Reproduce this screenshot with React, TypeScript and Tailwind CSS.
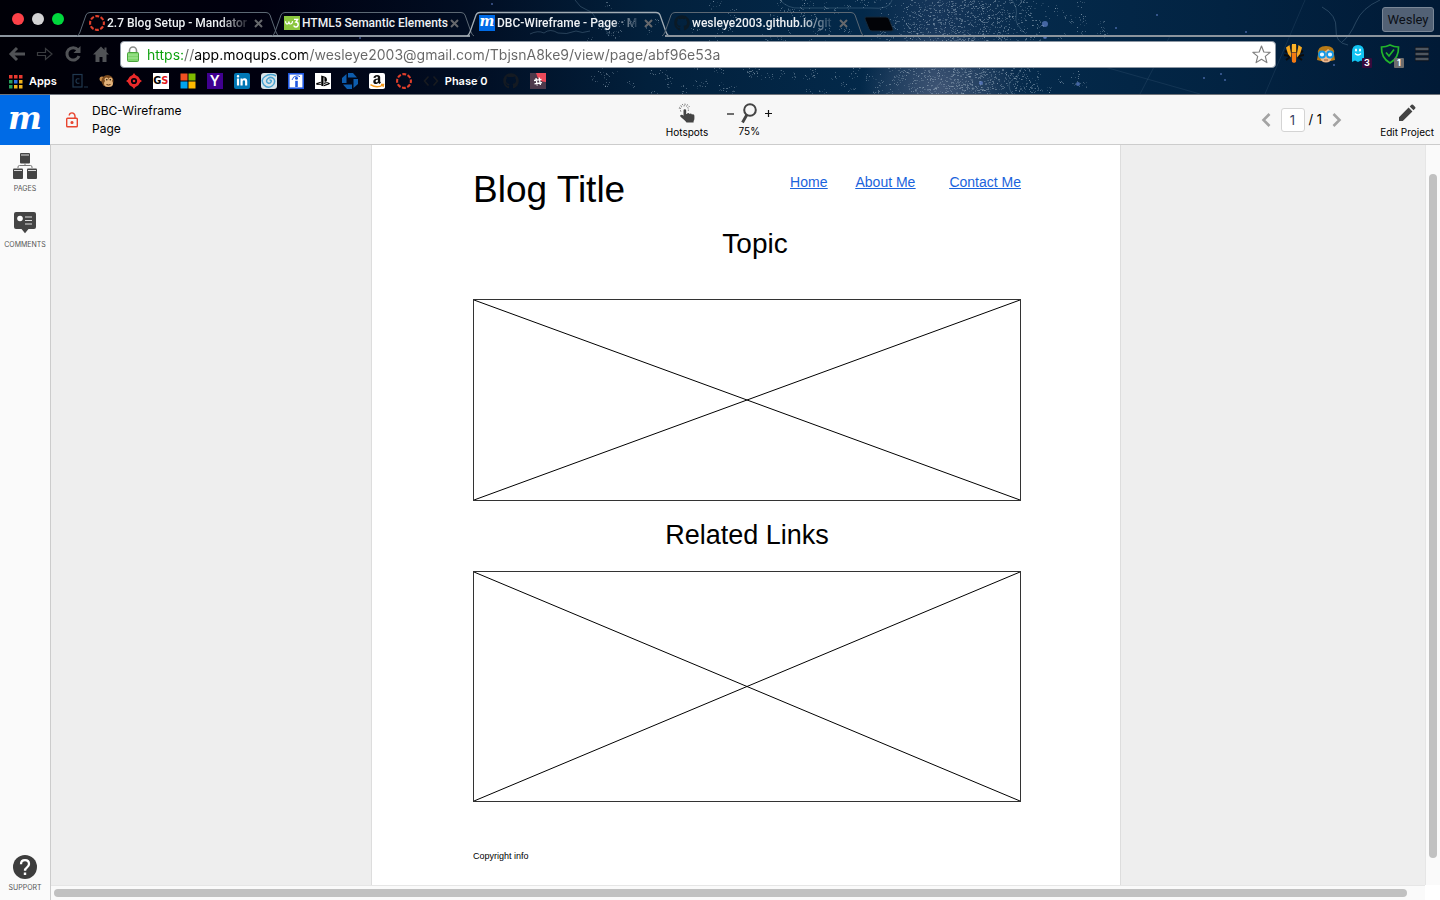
import type { ReactNode } from "react";
import { FaAmazon, FaGithub, FaLinkedinIn, FaPlaystation } from "react-icons/fa";

/* ---------- window backdrop ---------- */

function buildSpeckles() {
  let seed = 7;
  const next = () => {
    seed = (seed * 16807) % 2147483647;
    return seed / 2147483647;
  };
  const dots: { x: number; y: number; w: number; o: number }[] = [];
  // dense band of single points
  for (let i = 0; i < 1900; i++) {
    const spread = (next() + next()) / 2;
    dots.push({ x: Math.round(870 + spread * 180), y: Math.round(next() * 94), w: next() > 0.7 ? 2 : 1, o: 0.12 + next() * 0.35 });
  }
  // loose clusters on either side of the band
  for (let c = 0; c < 190; c++) {
    const cx = 585 + next() * 520;
    const cy = next() * 94;
    for (let i = 0; i < 8; i++) {
      const a = next() * 6.28;
      const r = 1 + next() * 4;
      dots.push({ x: Math.round(cx + Math.cos(a) * r), y: Math.round(cy + Math.sin(a) * r), w: 1, o: 0.12 + next() * 0.35 });
    }
  }
  return dots;
}

const speckles = buildSpeckles();
const stars = [
  [1045, 24, 3],
  [1045, 37, 2],
  [981, 83, 2],
  [1078, 84, 2],
  [1116, 28, 1],
  [1157, 15, 1],
  [1204, 78, 1],
  [1221, 74, 1],
  [1225, 80, 1],
  [1334, 65, 1],
  [1246, 32, 1],
  [492, 4, 1],
  [360, 38, 1],
];

function Backdrop() {
  return (
    <svg
      className="absolute inset-0 h-full w-full"
      viewBox="0 0 1440 95"
      preserveAspectRatio="xMidYMid slice"
      aria-hidden="true"
    >
      <defs>
        <linearGradient id="sky" x1="0" x2="1" y1="0" y2="0">
          <stop offset="0" stopColor="#000007" />
          <stop offset="0.18" stopColor="#00000f" />
          <stop offset="0.32" stopColor="#010d22" />
          <stop offset="0.45" stopColor="#02203c" />
          <stop offset="0.6" stopColor="#03294a" />
          <stop offset="0.65" stopColor="#17365a" />
          <stop offset="0.72" stopColor="#04294a" />
          <stop offset="0.85" stopColor="#022342" />
          <stop offset="1" stopColor="#011a36" />
        </linearGradient>
        <radialGradient id="haze">
          <stop offset="0" stopColor="#5b6a86" stopOpacity="0.6" />
          <stop offset="1" stopColor="#5b6a86" stopOpacity="0" />
        </radialGradient>
      </defs>
      <rect width="1440" height="95" fill="url(#sky)" />
      <ellipse cx="940" cy="90" rx="80" ry="65" fill="url(#haze)" />
      {speckles.map((d, i) => (
        <rect key={i} x={d.x} y={d.y} width={d.w} height="1" fill="#a9bccb" opacity={d.o} />
      ))}
      <g fill="none" stroke="#6f8fa6" strokeOpacity="0.35">
        <path d="M530 34q8-4 14-1q6-5 14 0q8 2 18-2q6 3 14 0" />
        <path d="M575 0q5 8 12 10t10 12q8 4 12 14" />
        <path d="M780 0q8 9 20 8h70q20 2 22-8" />
        <path d="M1012 0q6 8 4 16t10 18M1022 68q-4 8-10 12t0 14" />
        <path d="M1322 7q15 8 14 22t12 16M1380 0q-18 8-24 22t-14 20" />
        <path d="M1140 94l30-58M1080 60l120 34M1265 94l40-94M470 90l10-14" strokeOpacity="0.15" />
      </g>
      {stars.map(([x, y, r]) => (
        <circle key={`${x}-${y}`} cx={x} cy={y} r={r} fill="#6f8fe0" opacity="0.6" />
      ))}
    </svg>
  );
}

/* ---------- favicons ---------- */

function CanvasRing() {
  return (
    <svg className="size-4 shrink-0" viewBox="0 0 16 16" aria-hidden="true">
      <circle cx="8" cy="8" r="6.9" fill="none" stroke="#e13f2b" strokeWidth="2.1" strokeDasharray="3.9 1.52" strokeDashoffset="1.9" />
    </svg>
  );
}

function MoqupsMark() {
  return (
    <span className="flex size-4 shrink-0 items-center justify-center bg-[#006be6] pb-1 font-['DejaVu_Serif',serif] text-[14px] leading-3 font-bold text-white italic">
      m
    </span>
  );
}

function W3Mark() {
  return (
    <svg className="h-[14px] w-4 shrink-0" viewBox="0 0 16 14" aria-hidden="true">
      <rect width="16" height="14" fill="#8bc63f" />
      <path d="M1.500 5.200q.3 2.800 1.700 2.800T5 5.400Q5.100 8 6.600 8T8.600 5.200" fill="none" stroke="#fff" strokeWidth="1.200" />
      <path d="M10 3.400h3.600L11.800 6q2.400 0 2.400 2.400T11.900 11Q10.200 11 9.700 9.500" fill="none" stroke="#fff" strokeWidth="1.400" />
    </svg>
  );
}

/* ---------- tabs ---------- */

type TabProps = { icon: ReactNode; title: ReactNode; active?: boolean };

function Tab({ icon, title, active }: TabProps) {
  return (
    <button
      type="button"
      role="tab"
      aria-selected={!!active}
      className={
        active
          ? "relative flex h-[37px] w-[195px] shrink-0 items-center border-b-2 border-transparent pt-[11px] pr-2 pl-2 text-left"
          : "relative flex h-[37px] w-[195px] shrink-0 items-center border-b-2 border-[#8b949d] pt-[11px] pr-2 pl-2 text-left"
      }
    >
      <svg className="pointer-events-none absolute top-0 -left-1 h-[37px] w-[204px]" viewBox="0 0 204 37" aria-hidden="true">
        <path
          d="M1 36Q3 35 4 32L10 15Q11 12.500 14 12.500H190Q193 12.500 194 15L200 32Q201 35 203 36"
          fill="none"
          stroke={active ? "#a3adb5" : "#5c6874"}
          strokeWidth={active ? 1.3 : 1}
        />
      </svg>
      <span className="ml-[1px] flex w-full items-center gap-[2px]">
        {icon}
        <span className="min-w-0 flex-1 text-[12px] leading-4 font-medium whitespace-nowrap text-[#eef1f4]">{title}</span>
        <svg className="mr-1 size-[9px] shrink-0" viewBox="0 0 9 9" aria-hidden="true">
          <path d="M1 1l7 7M8 1l-7 7" stroke="#66686c" strokeWidth="2" />
        </svg>
      </span>
    </button>
  );
}

function TabStrip() {
  return (
    <div className="relative flex h-[37px] items-stretch font-[Roboto,sans-serif]" role="tablist">
      <div className="flex w-20 shrink-0 items-center gap-2 border-b-2 border-[#8b949d] pt-[3px] pl-3">
        <span className="size-3 rounded-full bg-[#fc4148]" />
        <span className="size-3 rounded-full bg-[#d3d3d5]" />
        <span className="size-3 rounded-full bg-[#00d83d]" />
      </div>
      <Tab
        icon={<CanvasRing />}
        title={<span className="block [mask-image:linear-gradient(to_right,black_78%,transparent)]">2.7 Blog Setup - Mandator</span>}
      />
      <Tab icon={<W3Mark />} title="HTML5 Semantic Elements" />
      <Tab
        active
        icon={<MoqupsMark />}
        title={<span className="block [mask-image:linear-gradient(to_right,black_78%,transparent)]">DBC-Wireframe - Page · M</span>}
      />
      <Tab
        icon={<FaGithub className="size-4 shrink-0 text-[#0b1a26]" />}
        title={<span className="block [mask-image:linear-gradient(to_right,black_74%,transparent)]">wesleye2003.github.io/git</span>}
      />
      <div className="flex min-w-0 flex-1 items-start justify-between border-b-2 border-[#8b949d]">
        <button type="button" aria-label="New tab" className="mt-4 ml-1">
          <svg className="h-4 w-[30px]" viewBox="0 0 30 16">
            <path d="M2 1h20q2 0 3 2l4 10q1 2-2 2H8q-2 0-3-2L1 3Q.500 1 2 1z" fill="#020307" stroke="#14293a" />
          </svg>
        </button>
        <button
          type="button"
          className="mt-[7px] mr-[6px] h-[25px] w-[52px] rounded-[3px] border border-[#7a8797] bg-[#526175] text-[13px] leading-5 text-[#0b0f16]"
        >
          Wesley
        </button>
      </div>
    </div>
  );
}

/* ---------- toolbar ---------- */

function NavIcon({ label, children }: { label: string; children: ReactNode }) {
  return (
    <button type="button" aria-label={label} className="flex size-5 items-center justify-center">
      <svg className="size-[18px]" viewBox="0 0 18 18" fill="none" stroke="#505256" strokeWidth="3">
        {children}
      </svg>
    </button>
  );
}

const urlColours =
  "bg-[linear-gradient(to_right,#0aa00a_0_36px,#666_36px_48px,#000_48px_160px,#666_160px)]";

function Toolbar() {
  return (
    <div className="relative flex h-[33px] items-center pt-[1px] pr-2 pl-[7px]">
      <div className="flex shrink-0 gap-2">
        <NavIcon label="Back">
          <path d="M17 9H4M9 3L3 9l6 6" />
        </NavIcon>
        <NavIcon label="Forward">
          <path d="M1.500 7.500h8v-4L16 9l-6.500 5.500v-4h-8z" stroke="#3a3c40" strokeWidth="1.200" />
        </NavIcon>
        <NavIcon label="Reload">
          <path d="M14 5A6.200 6.200 0 1 0 15 11" />
          <path d="M16.500 1v7h-7z" fill="#505256" stroke="none" />
        </NavIcon>
        <NavIcon label="Home">
          <path d="M9 1.500L1 9.500h2.500V17h4v-5h3v5h4V9.500H17l-2.500-2.500V2.500h-2v2.500z" fill="#505256" stroke="none" />
        </NavIcon>
      </div>
      <label className="ml-[9px] flex h-[27px] min-w-0 flex-1 items-center rounded-[4px] border border-[#8d97a3] bg-white pr-1 pl-[6px]">
        <svg className="h-4 w-3 shrink-0" viewBox="0 0 12 16" aria-hidden="true">
          <path d="M2.500 8V4.500a3.500 3.500 0 0 1 7 0V8" fill="none" stroke="#8a8d8a" strokeWidth="1.600" />
          <rect x="0.500" y="6.500" width="11" height="9" rx="1" fill="#7fd46c" stroke="#4aa53c" />
          <path d="M1 9h10M1 12h10" stroke="#a9e79b" />
        </svg>
        <input
          aria-label="Address"
          className={`ml-2 h-5 min-w-0 flex-1 bg-clip-text text-[14px] text-transparent outline-none ${urlColours}`}
          defaultValue="https://app.moqups.com/wesleye2003@gmail.com/TbjsnA8ke9/view/page/abf96e53a"
        />
        <svg className="size-[19px] shrink-0" viewBox="0 0 18 18" aria-hidden="true">
          <path d="M9 1l2.200 5.600 6 .4-4.600 3.800 1.500 5.900L9 13.500l-5.100 3.200 1.500-5.900L.800 7l6-.4z" fill="#fff" stroke="#7d7d7d" strokeWidth="1.100" strokeLinejoin="round" />
        </svg>
      </label>
      <div className="ml-2 flex shrink-0 items-center gap-3">
        <button type="button" aria-label="Feed claw" className="size-5">
          <svg viewBox="0 0 20 20">
            <path d="M1 7l4 2M0 11l5 1M2 16l4-3M19 7l-4 2M20 11l-5 1M18 16l-4-3" stroke="#0c0c0c" strokeWidth="2" />
            <path d="M2 3.500L5.500 1 7 9.500v4L4 10z" fill="#f7a91f" />
            <path d="M18 3.500L14.500 1 13 9.500v4L16 10z" fill="#f7a91f" />
            <path d="M8 0h4v8H8z" fill="#fbb429" />
            <path d="M7.500 8.500h5l-.5 9.500-2 1-2-1z" fill="#f27a14" />
            <path d="M7.500 1v7M12.500 1v7" stroke="#5b3206" strokeWidth=".8" />
          </svg>
        </button>
        <button type="button" aria-label="Reader" className="size-5">
          <svg viewBox="0 0 20 20">
            <path d="M2 10Q1 2 10 2t8 8l1 6-4 1H5l-4-1z" fill="#b87a16" />
            <path d="M4 8q6 0 8-3l4 3v5q-1 5.500-6 5.500T4 13z" fill="#eeb98c" />
            <circle cx="6" cy="10.500" r="3" fill="#e8f7ff" stroke="#1398e8" strokeWidth="1.800" />
            <circle cx="14" cy="10.500" r="3" fill="#e8f7ff" stroke="#1398e8" strokeWidth="1.800" />
            <path d="M8 16h4" stroke="#9a5a3a" />
          </svg>
        </button>
        <button type="button" aria-label="Trackers, 3 found" className="relative size-5">
          <svg viewBox="0 0 20 20">
            <path d="M4 18V8q0-7 6-7t6 7v10l-3-1.500-3 1.500-3-1.500z" fill="#12c4f2" />
            <ellipse cx="8" cy="6" rx="1" ry="1.600" fill="#fff" />
            <ellipse cx="12" cy="6" rx="1" ry="1.600" fill="#fff" />
            <path d="M7 9.500q3 3 6 0" fill="none" stroke="#fff" strokeWidth="1.300" />
          </svg>
          <span className="absolute -right-1 -bottom-1 h-[10px] w-[10px] rounded-[1px] bg-[#380b3c] text-center text-[9px] leading-[10px] font-bold text-white">3</span>
        </button>
        <button type="button" aria-label="Ad guard, 1 blocked" className="relative size-5">
          <svg viewBox="0 0 20 20" fill="none" stroke="#22b52b">
            <path d="M1.500 3Q6 3 10 1q4 2 8.500 2 .500 11-8.500 16Q1 14 1.500 3z" strokeWidth="1.700" />
            <path d="M6 8.500l3 3.500 5-6.500" strokeWidth="1.700" />
          </svg>
          <span className="absolute -right-1 -bottom-1 h-[10px] w-[10px] rounded-[1px] bg-[#6d6d6d] text-center text-[9px] leading-[10px] font-bold text-white">1</span>
        </button>
        <button type="button" aria-label="Browser menu" className="size-5">
          <svg viewBox="0 0 20 20">
            <path d="M3 5h14M3 10h14M3 15h14" stroke="#0d131d" strokeWidth="4.500" />
            <path d="M3.500 5h13M3.500 10h13M3.500 15h13" stroke="#4e565f" strokeWidth="2.400" />
          </svg>
        </button>
      </div>
    </div>
  );
}

/* ---------- bookmarks ---------- */

const appColours = ["#e8382f", "#e8382f", "#e8382f", "#27a05b", "#2f74e0", "#f2b51c", "#27a05b", "#f2b51c", "#f2b51c"];

function Bookmark({ label, children }: { label: string; children: ReactNode }) {
  return (
    <a href="#" aria-label={label} className="flex size-4 shrink-0 items-center justify-center">
      {children}
    </a>
  );
}

function Bookmarks() {
  return (
    <nav aria-label="Bookmarks" className="relative flex h-[25px] items-center gap-[11px] border-b border-[#6f747b] pb-[2px] pl-2 text-[11px] font-semibold text-white">
      <a href="#" className="mr-1 flex items-center gap-[6px]">
        <svg className="size-[15px]" viewBox="0 0 15 15" aria-hidden="true">
          {appColours.map((c, i) => (
            <rect key={i} x={1 + (i % 3) * 5} y={1 + Math.floor(i / 3) * 5} width="3.500" height="3.500" fill={c} />
          ))}
        </svg>
        Apps
      </a>
      <Bookmark label="Codecademy">
        <svg className="size-4" viewBox="0 0 16 16" fill="none" stroke="#20384f" strokeWidth="1.200">
          <rect x="1" y="1.500" width="9" height="12.500" />
          <path d="M7.500 6q-3.500-1-3.500 2t3.500 2M12 14h4" />
        </svg>
      </Bookmark>
      <Bookmark label="SurveyMonkey">
        <svg className="size-4" viewBox="0 0 16 16">
          <circle cx="3" cy="6" r="2.500" fill="#c78b4a" />
          <circle cx="8.500" cy="8" r="6" fill="#7a4a1e" />
          <ellipse cx="9.500" cy="10.500" rx="4.500" ry="3.500" fill="#e2b27a" />
          <circle cx="7.500" cy="6.500" r="2" fill="#e2b27a" />
          <circle cx="11.500" cy="6.500" r="2" fill="#e2b27a" />
          <circle cx="7.800" cy="6.800" r=".8" fill="#1d1208" />
          <circle cx="11.300" cy="6.800" r=".8" fill="#1d1208" />
          <path d="M7.500 11.500q2 1 4 0" stroke="#5a3010" fill="none" />
        </svg>
      </Bookmark>
      <Bookmark label="IGN">
        <svg className="size-4" viewBox="0 0 16 16">
          <circle cx="8" cy="8" r="4.600" fill="none" stroke="#ea2a2a" strokeWidth="3" />
          <g fill="#ea2a2a">
            <path d="M8 0l2.500 3.500h-5zM8 16l2.500-3.500h-5zM0 8l3.500-2.500v5zM16 8l-3.500-2.500v5z" />
            <circle cx="8" cy="8" r="1.300" />
          </g>
        </svg>
      </Bookmark>
      <Bookmark label="GameSpot">
        <span className="flex size-4 items-center justify-center bg-white font-['DejaVu_Sans_Condensed','DejaVu_Sans',sans-serif] text-[11px] leading-4 font-bold text-black">
          G<span className="text-[#e1191d]">S</span>
        </span>
      </Bookmark>
      <Bookmark label="Microsoft">
        <svg className="size-4" viewBox="0 0 16 16">
          <path d="M.500.500h7v7h-7z" fill="#f25022" />
          <path d="M8.500.500h7v7h-7z" fill="#7fba00" />
          <path d="M.500 8.500h7v7h-7z" fill="#00a4ef" />
          <path d="M8.500 8.500h7v7h-7z" fill="#ffb900" />
        </svg>
      </Bookmark>
      <Bookmark label="Yahoo">
        <span className="flex size-4 items-center justify-center bg-[#400090] text-[14px] leading-4 font-semibold text-white">Y</span>
      </Bookmark>
      <Bookmark label="LinkedIn">
        <span className="flex size-4 items-center justify-center rounded-[2px] bg-[#0077b5]">
          <FaLinkedinIn className="size-3 text-white" />
        </span>
      </Bookmark>
      <Bookmark label="Swirl">
        <svg className="size-4" viewBox="0 0 16 16">
          <rect width="16" height="16" rx="3" fill="#d9e3e8" />
          <path d="M15 3Q9 0 4 3.500T3 12q4 4 8 1t2-7Q10 3 7 5.500T7 10q2 1 3-1t-1.500-2" fill="none" stroke="#4aa3d0" strokeWidth="1.500" />
        </svg>
      </Bookmark>
      <Bookmark label="Indeed">
        <svg className="size-4" viewBox="0 0 16 16">
          <rect x=".800" y=".800" width="14.400" height="14.400" fill="#fff" stroke="#1f57e0" strokeWidth="1.600" />
          <circle cx="8.500" cy="5.200" r="1.500" fill="#1f57e0" />
          <path d="M8.500 7.800V14" stroke="#1f57e0" strokeWidth="2.600" />
          <path d="M4 7q1-4 5-4.200 2 0 3 1" fill="none" stroke="#1f57e0" strokeWidth=".9" />
        </svg>
      </Bookmark>
      <Bookmark label="PlayStation">
        <span className="flex size-4 items-center justify-center bg-white">
          <FaPlaystation className="size-[14px] text-black" />
        </span>
      </Bookmark>
      <Bookmark label="Chase">
        <svg className="size-4" viewBox="0 0 16 16" fill="#0d5cad">
          <path d="M6 0h5l4 4.500H6zM16 6v5l-4.500 4V6zM10 16H5l-4-4.500h9zM0 10V5l4.500-4v9z" />
        </svg>
      </Bookmark>
      <Bookmark label="Amazon">
        <span className="flex size-4 items-center justify-center rounded-[2px] bg-white">
          <svg className="size-4" viewBox="0 0 16 16">
            <FaAmazon x="1" y="1" size={14} color="#111" />
            <path d="M0 11h16v3.500q-8 3-16 0z" fill="#fff" />
            <path d="M1.500 11.700q6.500 4 12.500.3M12 11.500h2.500l-.5 2.300" fill="none" stroke="#f79a1c" strokeWidth="1.400" />
          </svg>
        </span>
      </Bookmark>
      <Bookmark label="Canvas">
        <CanvasRing />
      </Bookmark>
      <a href="#" className="flex items-center gap-[6px]">
        <svg className="size-4" viewBox="0 0 16 16" fill="none" stroke="#181b20" strokeWidth="1.600" aria-hidden="true">
          <path d="M5.500 3.500L1.500 8l4 4.500M10.500 3.500l4 4.500-4 4.500" />
        </svg>
        Phase 0
      </a>
      <span className="ml-1 flex gap-[11px]">
        <Bookmark label="GitHub">
          <FaGithub className="size-4 text-[#141a22]" />
        </Bookmark>
        <Bookmark label="Slack">
          <svg className="size-4" viewBox="0 0 16 16">
            <rect width="16" height="16" fill="#4d394b" />
            <path d="M6 0h10v9Q8 9 6 0z" fill="#ec4a5a" />
            <path d="M6 5L7.200 12.500M9.200 4.500l1.200 7.500M4 7.500l7.500-1.200M4.500 10.800l7.500-1.200" stroke="#fff" strokeWidth="1.300" />
          </svg>
        </Bookmark>
      </span>
    </nav>
  );
}

/* ---------- Moqups viewer ---------- */

function AppHeader() {
  return (
    <header className="flex h-[50px] shrink-0 items-stretch border-b border-[#ccc] bg-[#f7f7f7] text-black">
      <div className="flex flex-1 items-center">
        <a
          href="#"
          aria-label="Moqups home"
          className="-mb-px flex h-[50px] w-[50px] items-center justify-center bg-[#006be6] pb-1 font-['DejaVu_Serif',serif] text-[32px] font-bold text-white italic"
        >
          m
        </a>
        <svg className="ml-4 h-4 w-3" viewBox="0 0 12 16" fill="none" stroke="#e8452f" strokeWidth="1.400" aria-hidden="true">
          <rect x=".7" y="6.200" width="10.600" height="8.600" rx=".8" />
          <path d="M3.200 3.500Q3.500.900 6 .900T9 4v2" />
          <circle cx="6" cy="10.500" r=".9" fill="#e8452f" />
        </svg>
        <div className="ml-[14px] text-[12px] leading-[18px]">
          <h1>DBC-Wireframe</h1>
          <p>Page</p>
        </div>
      </div>
      <div className="flex items-start gap-4 pt-2 text-[10px] leading-[14px]">
        <button type="button" className="flex flex-col items-center">
          <svg className="h-[21px] w-5" viewBox="0 0 20 21" aria-hidden="true">
            <path
              d="M5.500 8.500q0-1.300 1.300-1.300T8.200 8.500V12h.8q.2-1 1.200-1t1.300 1q.3-.5 1.200-.5t1.200 1q.4-.4 1.200-.3 1.200.2 1.300 1.500v2.800q0 1.500-.8 2.500v1.500H8.500q-1-1.500-2.800-3L2.500 14.800q-.8-1 .1-1.700t2 0l.9.700z"
              fill="#444"
              transform="translate(1 -1)"
            />
            <path d="M3.800 8.500q-1.500-4.500 2.200-5.500t4.800 1.500.2 4M2.300 5.500Q3.500 1 7.800 1.200t5 4" fill="none" stroke="#555" strokeWidth="1" strokeDasharray="1 1.400" />
          </svg>
          <span className="pt-[1px]">Hotspots</span>
        </button>
        <div className="flex flex-col items-center">
          <div className="flex items-center gap-[5px]">
            <button type="button" aria-label="Zoom out" className="flex size-3 items-center justify-center">
              <svg className="size-[9px]" viewBox="0 0 9 9">
                <path d="M1 5h7" stroke="#111" strokeWidth="1.200" />
              </svg>
            </button>
            <svg className="h-[21px] w-4" viewBox="0 0 16 21" fill="none" stroke="#444" aria-hidden="true">
              <circle cx="9" cy="7" r="5.800" strokeWidth="2" />
              <path d="M6 11.500L1.500 19.500" strokeWidth="2.800" />
            </svg>
            <button type="button" aria-label="Zoom in" className="flex size-3 items-center justify-center">
              <svg className="size-[9px]" viewBox="0 0 9 9">
                <path d="M1 4.500h7M4.500 1v7" stroke="#111" strokeWidth="1.200" />
              </svg>
            </button>
          </div>
          <span>75%</span>
        </div>
      </div>
      <div className="flex flex-1 items-center justify-end">
        <button type="button" aria-label="Previous page" className="p-[2px]">
          <svg className="h-4 w-[10px]" viewBox="0 0 10 16">
            <path d="M8.500 2L2.500 8l6 6" fill="none" stroke="#a3a3a3" strokeWidth="2.600" />
          </svg>
        </button>
        <input
          aria-label="Page number"
          defaultValue="1"
          className="mr-1 ml-2 size-6 rounded-[3px] border border-[#d4d4d4] bg-white text-center text-[13px] text-[#3c3f63] outline-none"
        />
        <span className="text-[13px]">/ 1</span>
        <button type="button" aria-label="Next page" className="ml-2 p-[2px]">
          <svg className="h-4 w-[10px]" viewBox="0 0 10 16">
            <path d="M1.500 2l6 6-6 6" fill="none" stroke="#a3a3a3" strokeWidth="2.600" />
          </svg>
        </button>
        <button type="button" className="mr-[6px] ml-9 flex flex-col items-center pt-1 text-[10px] leading-[14px]">
          <svg className="mb-[3px] size-[18px]" viewBox="0 0 18 18" fill="#444" aria-hidden="true">
            <path d="M1 13.200L10.600 3.600l3.800 3.800L4.800 17H1zM11.700 2.500l1.700-1.700q.8-.6 1.600 0l2.200 2.200q.6.800 0 1.600l-1.700 1.700z" />
          </svg>
          Edit Project
        </button>
      </div>
    </header>
  );
}

function Sidebar() {
  return (
    <aside className="flex w-[51px] shrink-0 flex-col items-stretch border-r border-[#ccc] bg-[#fafafa] text-[7px] leading-[10px] text-[#555]">
      <button type="button" className="mt-2 flex flex-col items-center gap-1">
        <svg className="h-[27px] w-6" viewBox="0 0 24 27" aria-hidden="true">
          <g fill="#444">
            <rect x="7" y="0" width="10" height="10.500" rx="1" />
            <rect x="0" y="15.500" width="10" height="10.500" rx="1" />
            <rect x="14" y="15.500" width="10" height="10.500" rx="1" />
          </g>
          <path d="M8 2h8M1 17.500h8M15 17.500h8" stroke="#ddd" strokeWidth="1" />
          <path d="M12 10.500V13M5 15v-1q0-1.500 1.500-1.500h11Q19 12.500 19 14v1" fill="none" stroke="#777" />
        </svg>
        PAGES
      </button>
      <button type="button" className="mt-[18px] flex flex-col items-center gap-[6px]">
        <svg className="h-[22px] w-[22px]" viewBox="0 0 22 22" aria-hidden="true">
          <path d="M2 0h18q2 0 2 2v13q0 2-2 2h-5.500L11 21.200 7.500 17H2q-2 0-2-2V2Q0 0 2 0z" fill="#444" />
          <circle cx="6" cy="6.500" r="2.800" fill="#fff" />
          <path d="M11 5h7M11 8.500h7M11 12h7" stroke="#ddd" strokeWidth="1.200" />
        </svg>
        COMMENTS
      </button>
      <button type="button" className="mt-auto mb-[7px] flex flex-col items-center gap-1">
        <svg className="size-6" viewBox="0 0 24 24" aria-hidden="true">
          <circle cx="12" cy="12" r="12" fill="#3d3d3d" />
          <path d="M8 9.200Q8 5.200 12 5.200T16 9q0 1.800-2 3.400-2 1.500-2 3.400" fill="none" stroke="#fff" strokeWidth="2.300" />
          <path d="M10.800 17.500h2.400v2.400h-2.400z" fill="#fff" />
        </svg>
        SUPPORT
      </button>
    </aside>
  );
}

function ImagePlaceholder({ label, size }: { label: string; size: string }) {
  return (
    <svg className={`block w-full border border-[#333] ${size}`} role="img" aria-label={label}>
      <line x1="0" y1="0" x2="100%" y2="100%" stroke="#000" />
      <line x1="100%" y1="0" x2="0" y2="100%" stroke="#000" />
    </svg>
  );
}

function WireframePage() {
  return (
    <article className="w-[750px] max-w-full border-x border-[#ddd] bg-white pr-[99px] pl-[101px] font-['Liberation_Sans',Arial,sans-serif] text-black">
      <div className="flex items-start justify-between pt-[25px]">
        <h2 className="text-[37px] leading-10">Blog Title</h2>
        <nav className="flex pt-[2px] text-[14px] leading-5 text-[#1a63dc] underline">
          <a href="#">Home</a>
          <a href="#" className="ml-7">About Me</a>
          <a href="#" className="ml-[34px]">Contact Me</a>
        </nav>
      </div>
      <h3 className="mt-[18px] pl-4 text-center text-[28px] leading-8">Topic</h3>
      <div className="mt-[39px]">
        <ImagePlaceholder label="Topic image" size="h-[202px]" />
      </div>
      <h3 className="mt-[18px] text-center text-[27px] leading-8">Related Links</h3>
      <div className="mt-5">
        <ImagePlaceholder label="Related links image" size="h-[231px]" />
      </div>
      <p className="mt-12 text-[9px] leading-3">Copyright info</p>
    </article>
  );
}

export default function App() {
  return (
    <div className="flex h-screen flex-col overflow-hidden font-[Inter,sans-serif]">
      <div className="relative shrink-0 bg-[#01060f]">
        <Backdrop />
        <TabStrip />
        <Toolbar />
        <Bookmarks />
      </div>
      <AppHeader />
      <div className="flex min-h-0 flex-1">
        <Sidebar />
        <main className="grid min-h-0 min-w-0 flex-1 grid-cols-[1fr_15px] grid-rows-[1fr_15px] bg-[#eee]">
          <div className="flex min-h-0 justify-center overflow-hidden pl-4">
            <WireframePage />
          </div>
          <div className="flex flex-col items-center border-l border-[#e6e6e6] bg-[#fafafa] pt-[29px] pb-[27px]">
            <span className="w-2 flex-1 rounded-full bg-[#c1c1c1]" />
          </div>
          <div className="flex items-center border-t border-[#e6e6e6] bg-[#fafafa] pr-[18px] pl-[3px]">
            <span className="h-2 flex-1 rounded-full bg-[#c1c1c1]" />
          </div>
          <div className="bg-white" />
        </main>
      </div>
    </div>
  );
}
